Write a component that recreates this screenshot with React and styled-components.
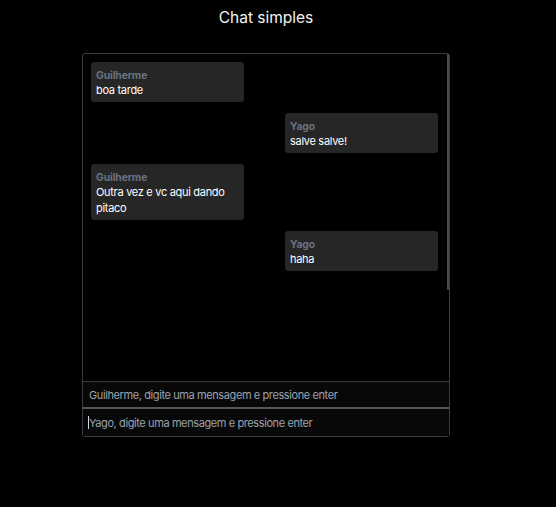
import React from 'react';
import styled, { createGlobalStyle } from 'styled-components';

const messages = [
  { id: 1, author: 'Guilherme', text: 'boa tarde', mine: false },
  { id: 2, author: 'Yago', text: 'salve salve!', mine: true },
  { id: 3, author: 'Guilherme', text: 'Outra vez e vc aqui dando pitaco', mine: false },
  { id: 4, author: 'Yago', text: 'haha', mine: true },
];

export default function App() {
  return (
    <Page>
      <GlobalStyle />
      <Title>Chat simples</Title>
      <ChatBox>
        <MessageList>
          {messages.map((m) => (
            <Row key={m.id} $right={m.mine}>
              <Bubble>
                <Author>{m.author}</Author>
                <Text>{m.text}</Text>
              </Bubble>
            </Row>
          ))}
          <ScrollThumb />
        </MessageList>
        <Field>
          <Input placeholder="Guilherme, digite uma mensagem e pressione enter" />
        </Field>
        <Field $second>
          <Caret />
          <Input placeholder="Yago, digite uma mensagem e pressione enter" />
        </Field>
      </ChatBox>
    </Page>
  );
}

const GlobalStyle = createGlobalStyle`
  * {
    box-sizing: border-box;
  }
  html, body {
    margin: 0;
    background: #000000;
    font-family: Inter, "Noto Sans", sans-serif;
  }
`;

const Page = styled.div`
  width: 532px;
  display: flex;
  flex-direction: column;
  align-items: center;
  padding-top: 8px;
`;

const Title = styled.h1`
  margin: 0 0 26px;
  font-size: 15.5px;
  font-weight: 400;
  line-height: 19px;
  color: #f2f2f2;
`;

const ChatBox = styled.div`
  width: 368px;
  height: 384px;
  border: 1px solid #3b3b40;
  border-radius: 3px;
  display: flex;
  flex-direction: column;
`;

const MessageList = styled.div`
  position: relative;
  flex: 1;
  padding: 8px 11px 8px 8px;
  display: flex;
  flex-direction: column;
  gap: 11px;
`;

const ScrollThumb = styled.div`
  position: absolute;
  top: 0;
  right: 0;
  width: 2px;
  height: 236px;
  background: #4a4a52;
`;

const Row = styled.div`
  display: flex;
  justify-content: ${(p) => (p.$right ? 'flex-end' : 'flex-start')};
`;

const Bubble = styled.div`
  width: 153px;
  background: #262626;
  border-radius: 3px;
  padding: 5px 5px 3.5px;
`;

const Author = styled.div`
  font-size: 10.3px;
  font-weight: 700;
  letter-spacing: -0.1px;
  line-height: 16px;
  color: #6b7280;
`;

const Text = styled.div`
  font-size: 11px;
  letter-spacing: -0.3px;
  line-height: 15.5px;
  color: #ffffff;
`;

const Field = styled.div`
  position: relative;
  height: ${(p) => (p.$second ? '28px' : '27px')};
  border-top: 1px solid ${(p) => (p.$second ? '#55555c' : '#3b3b40')};
  border-bottom: ${(p) => (p.$second ? 'none' : '1px solid #55555c')};
  background: #080808;
`;

const Caret = styled.span`
  position: absolute;
  left: 5px;
  top: 7px;
  width: 1px;
  height: 13px;
  background: #d4d4d8;
`;

const Input = styled.input`
  display: block;
  width: 100%;
  height: 100%;
  margin: 0;
  border: none;
  background: transparent;
  color: #d4d4d8;
  font-family: Inter, "Noto Sans", sans-serif;
  font-size: 11px;
  letter-spacing: -0.4px;
  padding: 0 5px 0 6px;
  outline: none;

  &::placeholder {
    color: #9ca3af;
  }
`;
